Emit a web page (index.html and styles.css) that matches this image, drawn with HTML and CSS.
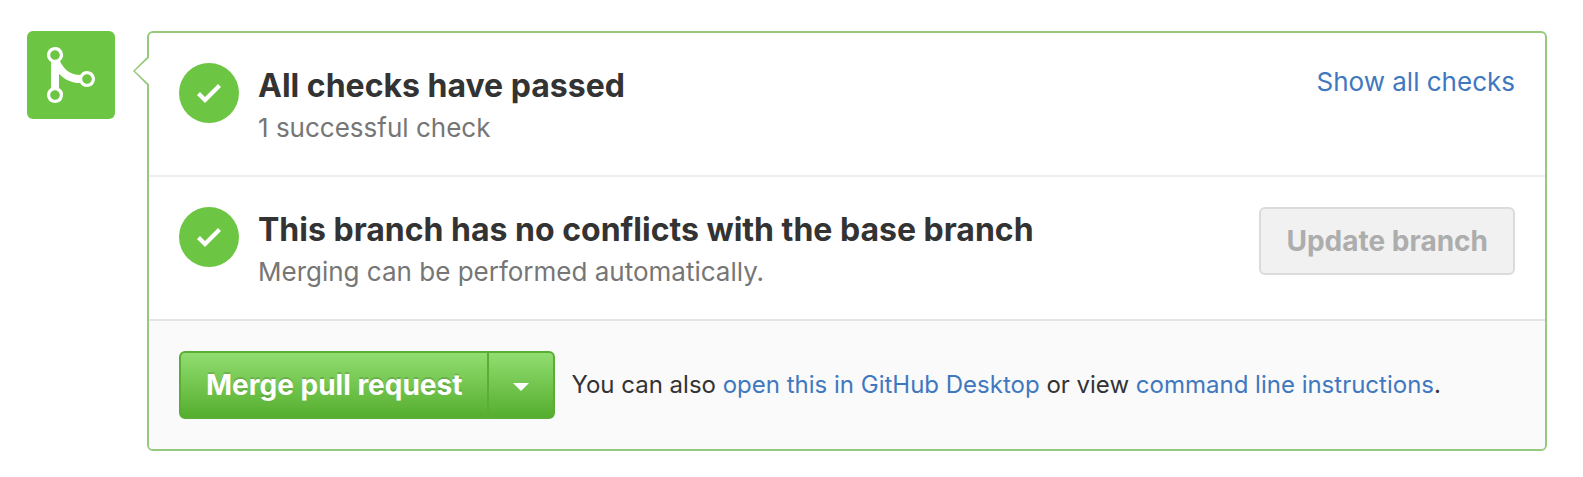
FILE: index.html
```html
<!DOCTYPE html>
<html lang="en">
<head>
<meta charset="utf-8">
<title>Merge pull request</title>
<link rel="stylesheet" href="styles.css">
</head>
<body>
<main class="merge">
  <div class="merge-icon">
    <svg width="48" height="64" viewBox="0 0 12 16" fill="#fff" aria-hidden="true"><path fill-rule="evenodd" d="M10 7c-.73 0-1.38.41-1.73 1.02V8C7.22 7.98 6 7.64 5.14 6.98c-.75-.58-1.5-1.61-1.89-2.44A1.993 1.993 0 0 0 2 .99C.89.99 0 1.89 0 3a2 2 0 0 0 1 1.72v6.56c-.59.35-1 .99-1 1.72 0 1.11.89 2 2 2a1.993 1.993 0 0 0 1-3.72V7.67c.67.7 1.44 1.27 2.3 1.69.86.42 2.03.63 2.97.64v-.02c.36.61 1 1.02 1.73 1.02 1.11 0 2-.89 2-2 0-1.11-.89-2-2-2zm-6.8 6c0 .66-.55 1.2-1.2 1.2-.65 0-1.2-.55-1.2-1.2 0-.65.55-1.2 1.2-1.2.65 0 1.2.55 1.2 1.2zm0-10c0 .66-.55 1.2-1.2 1.2C1.34 4.2.8 3.65.8 3c0-.65.55-1.2 1.2-1.2.65 0 1.2.55 1.2 1.2zm6.8 7.2c-.66 0-1.2-.55-1.2-1.2 0-.65.55-1.2 1.2-1.2.65 0 1.2.55 1.2 1.2 0 .65-.54 1.2-1.2 1.2z"/></svg>
  </div>
  <section class="card">
    <svg class="card-pointer" width="16" height="30" viewBox="0 0 16 30" aria-hidden="true"><path d="M16 1L14 1L0 15L14 29L16 29z" fill="#95c97e"/><path d="M16 1.8L2 15L16 28.2z" fill="#fff"/></svg>
    <div class="row">
      <span class="status"><svg width="24" height="32" viewBox="0 0 12 16" fill="#fff" aria-hidden="true"><path d="M12 5l-8 8-4-4 1.5-1.5L4 10l6.5-6.5z"/></svg></span>
      <div class="row-text">
        <h2 class="title">All checks have passed</h2>
        <p class="subtitle">1 successful check</p>
      </div>
      <a class="link toggle" href="#checks">Show all checks</a>
    </div>
    <div class="row">
      <span class="status"><svg width="24" height="32" viewBox="0 0 12 16" fill="#fff" aria-hidden="true"><path d="M12 5l-8 8-4-4 1.5-1.5L4 10l6.5-6.5z"/></svg></span>
      <div class="row-text">
        <h2 class="title">This branch has no conflicts with the base branch</h2>
        <p class="subtitle">Merging can be performed automatically.</p>
      </div>
      <button class="btn btn-disabled" type="button" disabled>Update branch</button>
    </div>
    <div class="footer">
      <div class="btn-group">
        <button class="btn btn-primary" type="button">Merge pull request</button>
        <button class="btn btn-primary btn-caret" type="button" aria-label="Select merge method"><span class="caret"></span></button>
      </div>
      <p class="hint">You can also <a class="link" href="#desktop">open this in GitHub Desktop</a> or view <a class="link" href="#cli">command line instructions</a>.</p>
    </div>
  </section>
</main>
</body>
</html>
```
FILE: styles.css
```css
* {
  box-sizing: border-box;
}

body {
  margin: 0;
  background: #fff;
  color: #333;
  font-family: Inter, "Liberation Sans", sans-serif;
  font-size: 26px;
}

.merge {
  display: flex;
  align-items: flex-start;
  gap: 32px;
  padding: 31px 36px 27px 27px;
}

.merge-icon {
  display: flex;
  flex: none;
  align-items: center;
  justify-content: center;
  width: 88px;
  height: 88px;
  border-radius: 6px;
  background: #6cc644;
}

.card {
  position: relative;
  flex: 1;
  min-width: 0;
  border: 2px solid #95c97e;
  border-radius: 6px;
}

.card-pointer {
  position: absolute;
  top: 23px;
  left: -16px;
}

.row {
  display: flex;
  align-items: flex-start;
  gap: 19px;
  padding: 30px 30px 28px;
  border-bottom: 2px solid #eee;
}

.row + .row {
  border-bottom-color: #e5e5e5;
}

.status {
  display: flex;
  flex: none;
  align-items: center;
  justify-content: center;
  width: 60px;
  height: 60px;
  border-radius: 50%;
  background: #6cc644;
}

.row-text {
  flex: 1;
}

.title {
  margin: 0;
  font-size: 32px;
  font-weight: 650;
  line-height: 46px;
}

.subtitle {
  margin: 0;
  color: #767676;
  line-height: 38px;
}

.link {
  color: #4078c0;
  text-decoration: none;
}

.toggle {
  line-height: 38px;
}

.btn {
  padding: 12px 25px;
  border: 2px solid #dbdbdb;
  border-radius: 6px;
  font-family: inherit;
  font-size: 28px;
  font-weight: 700;
  line-height: 40px;
  white-space: nowrap;
}

.btn-disabled {
  background: #f1f1f1;
  color: #adadad;
}

.footer {
  display: flex;
  align-items: center;
  gap: 16px;
  padding: 30px;
  border-radius: 0 0 4px 4px;
  background: #fafafa;
}

.btn-group {
  display: flex;
  flex: none;
  border: 2px solid #5aad35;
  border-radius: 6px;
  background: linear-gradient(#91dd70, #55ae2e);
}

.btn-primary {
  border: 0;
  background: none;
  color: #fff;
  text-shadow: 0 -2px 0 rgba(0, 0, 0, 0.15);
}

.btn-caret {
  display: flex;
  align-items: center;
  padding: 16px 24px 12px;
  border-left: 2px solid #5aad35;
  border-radius: 0;
}

.caret {
  border: 8px solid transparent;
  border-top-color: #fff;
  border-bottom: 0;
}

.hint {
  margin: 0;
  font-size: 24px;
  line-height: 36px;
}
```
